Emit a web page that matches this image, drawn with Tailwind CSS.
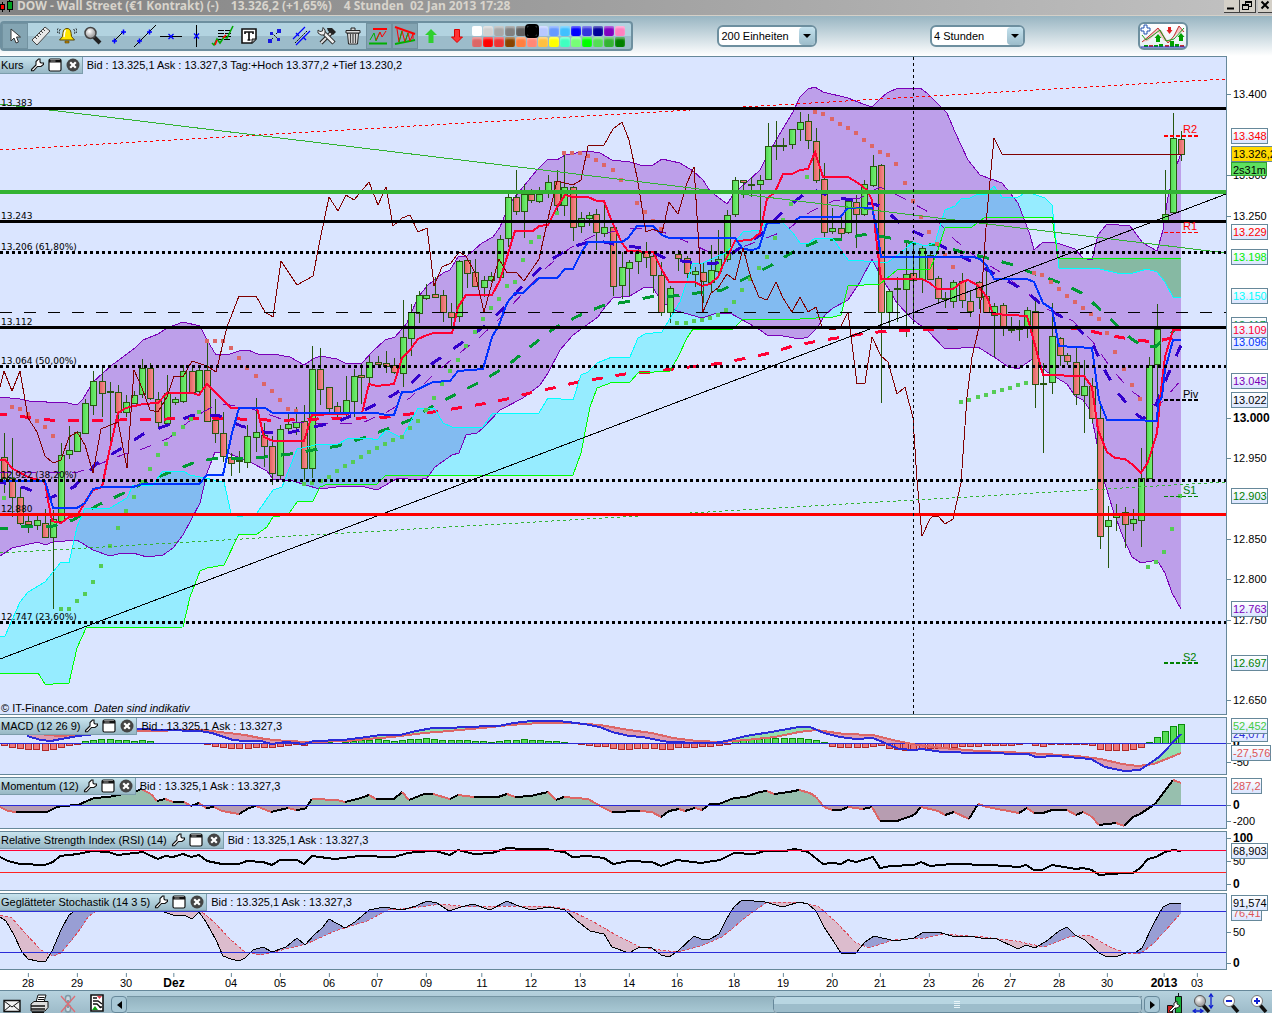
<!DOCTYPE html>
<html lang="de">
<head>
  <meta charset="UTF-8" />
  <meta name="viewport" content="width=device-width, initial-scale=1.0"/>
  <title>DOW - Wall Street (€1 Kontrakt)</title>
  <script src="https://cdn.jsdelivr.net/npm/@tailwindcss/browser@4"></script>
</head>
<body class="h-screen flex flex-col overflow-hidden bg-white font-['Liberation_Sans',Arial,sans-serif] text-[11px] leading-none text-black">

  <!-- Shared icons -->
  <svg class="absolute w-0 h-0" aria-hidden="true">
    <defs>
      <linearGradient id="gGreen"><stop offset="0" stop-color="#50d850"/><stop offset="1" stop-color="#78f078"/></linearGradient>
      <linearGradient id="gRed"><stop offset="0" stop-color="#e06060"/><stop offset="1" stop-color="#f89090"/></linearGradient>
      <radialGradient id="gLens" cx="0.4" cy="0.35"><stop offset="0" stop-color="#fff"/><stop offset="1" stop-color="#a8a8a8"/></radialGradient>
      <symbol id="wrench" viewBox="0 0 14 14">
        <path d="M1.500 11.500 6 7V3.500L8.500 1h1.500v3l1 1h2.500v1.500L11 8.500H7.500L3.500 12.800H1.500Z" fill="#fff" stroke="#111" stroke-width="1.100"/>
      </symbol>
      <symbol id="window" viewBox="0 0 14 14">
        <rect x="1" y="1" width="12" height="12" rx="1.500" fill="#fff" stroke="#111" stroke-width="1.200"/>
        <path d="M1 2h12v2.500H1z" fill="#111"/><path d="M2.500 3h5" stroke="#999"/>
      </symbol>
      <symbol id="close" viewBox="0 0 14 14">
        <circle cx="7" cy="7" r="6.500" fill="#444"/>
        <path d="M4.200 4.200 9.800 9.800M9.800 4.200 4.200 9.800" stroke="#fff" stroke-width="2.200"/>
      </symbol>
    </defs>
  </svg>

  <!-- Title bar -->
  <header class="h-4 shrink-0 flex items-start bg-linear-to-r from-[#828282] to-[#c2c2c2] border-b border-[#d4d0c8] text-[#d8d4cc]">
    <svg class="w-4 h-3 shrink-0" viewBox="0 0 16 12" shape-rendering="crispEdges">
      <path d="M2.500 2v10M9.500 0v12" stroke="#000"/>
      <rect x="0" y="4.500" width="4.500" height="5" fill="#f00" stroke="#000"/>
      <rect x="7.500" y="1.500" width="5" height="8" fill="#00a020" stroke="#000"/>
    </svg>
    <h1 class="flex-1 flex gap-3 pl-px font-['Noto_Sans',sans-serif] font-bold text-[12px] leading-3 whitespace-nowrap">
      <span>DOW - Wall Street (€1 Kontrakt) (-)</span>
      <span>13.326,2 (+1,65%)</span>
      <span>4 Stunden&nbsp; 02 Jan 2013 17:28</span>
    </h1>
    <button aria-label="Minimieren" class="w-4 h-[13px] bg-[#d4d0c8] border-r border-b border-[#404040]"><svg viewBox="0 0 15 12" class="w-full h-full"><path d="M3 8.500h7" stroke="#000" stroke-width="2"/></svg></button>
    <button aria-label="Wiederherstellen" class="w-4 h-[13px] bg-[#d4d0c8] border-r border-b border-[#404040]"><svg viewBox="0 0 15 12" class="w-full h-full" shape-rendering="crispEdges"><path d="M5.500 4V1.500h6v5H9M2.500 4.500h6v5h-6z" fill="none" stroke="#000"/><path d="M5 2h7M2 5h7" stroke="#000" stroke-width="2"/></svg></button>
    <button aria-label="Schließen" class="ml-0.5 w-[14px] h-[13px] bg-[#d4d0c8] border-b border-[#404040]"><svg viewBox="0 0 14 12" class="w-full h-full"><path d="M3.500 1.500 10.500 8.500M10.500 1.500 3.500 8.500" stroke="#000" stroke-width="2"/></svg></button>
  </header>

  <!-- Toolbar -->
  <div class="h-10 shrink-0 flex items-center bg-linear-to-b from-[#98b5c2] to-white">
    <div class="flex items-center h-[30px] rounded border-2 border-[#6d8f9f] bg-linear-to-b from-[#b2d3e0] from-50% to-[#9cbcca] to-50% pr-1.5">
      <div id="tools" class="flex">
        <button aria-label="Auswahl" class="w-[26px] h-[26px] grid place-items-center bg-[#84a5b3] border border-[#7292a0]"><svg class="w-5 h-5" viewBox="0 0 20 20"><path d="M6 3v12l3-3 2 5 2.500-1-2-5h4z" fill="#fff" stroke="#333"/></svg></button>
        <button aria-label="Lineal" class="w-[26px] h-[26px] grid place-items-center"><svg class="w-5 h-5" viewBox="0 0 20 20"><path d="M1 14 14 1l5 4L6 19z" fill="#e8e8e8" stroke="#444"/><path d="m4 11 2 2m0-4 2 2m0-4 2 2m0-4 2 2m0-4 2 2" stroke="#444"/></svg></button>
        <button aria-label="Alarm" class="w-[26px] h-[26px] grid place-items-center"><svg class="w-5 h-5" viewBox="0 0 20 20"><path d="M10 2.500c-4 0-4 4-4.500 8L2.500 14h15l-3-3.500c-.5-4-.5-8-4.500-8z" fill="#ffe600" stroke="#5a4500"/><path d="M8.500 4c-1.500 2-1 5-1.500 7" stroke="#fff" stroke-width="1.500" fill="none"/><path d="M8 15h4v2H8z" fill="#b88000" stroke="#5a4500" stroke-width=".6"/><path d="M3.500 3Q1.500 5 2.500 8M1 2.500Q-.5 5 .5 7M16.500 3q2 2 1 5M19 2.500q1.500 2.500.5 4.500" stroke="#111" fill="none" stroke-dasharray="2 1"/></svg></button>
        <button aria-label="Lupe" class="w-[26px] h-[26px] grid place-items-center"><svg class="w-5 h-5" viewBox="0 0 20 20"><path d="m11 11 6 6" stroke="#222" stroke-width="4"/><circle cx="7.500" cy="7" r="5.500" fill="url(#gLens)" stroke="#444" stroke-width="1.500"/></svg></button>
        <button aria-label="Strecke" class="w-[26px] h-[26px] grid place-items-center"><svg class="w-[26px] h-5" viewBox="0 0 26 20"><path d="m8 15 9-9" stroke="#000"/><path d="M6 15h5M8.500 12.500v5M15 6h5M17.500 3.500v5" stroke="#00f" stroke-width="1.500"/></svg></button>
        <button aria-label="Gerade" class="w-[26px] h-[26px] grid place-items-center"><svg class="w-[26px] h-6" viewBox="0 0 26 24"><path d="M2 23 24 1" stroke="#000"/><path d="M5 17h5M7.500 14.500v5M15 8h5M17.500 5.500v5" stroke="#00f" stroke-width="1.500"/></svg></button>
        <button aria-label="Horizontale" class="w-[26px] h-[26px] grid place-items-center"><svg class="w-[26px] h-5" viewBox="0 0 26 20"><path d="M2 10.500h22" stroke="#000"/><path d="m10.500 8 5 5m0-5-5 5" stroke="#00f" stroke-width="1.300"/></svg></button>
        <button aria-label="Vertikale" class="w-[26px] h-[26px] grid place-items-center"><svg class="w-[26px] h-[22px]" viewBox="0 0 26 22"><path d="M12.500 0v22" stroke="#000"/><path d="m10 8.500 5 5m0-5-5 5" stroke="#00f" stroke-width="1.300"/></svg></button>
        <button aria-label="Fibonacci" class="w-[26px] h-[26px] grid place-items-center"><svg class="w-6 h-[22px]" viewBox="0 0 24 22"><path d="M7 5.500h13M7 8.500h13M7 11.500h13M6 14.500h13" stroke="#000" stroke-dasharray="6 1"/><path d="m1 18 2 2 3-6 3 4 4-6 3 1 6-12" fill="none" stroke="#00a800" stroke-width="1.600"/><path d="m4 20 2-5M12 13l3-3" stroke="#f00" stroke-width="1.600"/></svg></button>
        <button aria-label="Text" class="w-[26px] h-[26px] grid place-items-center"><svg class="w-4 h-4" viewBox="0 0 16 16"><path d="M1 1h14v10l-4 4H1z" fill="#fff" stroke="#111" stroke-width="1.600"/><path d="M11 15v-4h4" fill="#999" stroke="#111"/><path d="M4 6V4h8v2M8 4v8M6.500 12h3" fill="none" stroke="#111" stroke-width="1.700"/></svg></button>
        <button aria-label="Zickzack" class="w-[26px] h-[26px] grid place-items-center"><svg class="w-4 h-4" viewBox="0 0 16 16"><path d="m3 13 3-3M5 5l6 6M9 6l3-3" fill="none" stroke="#000" stroke-dasharray="2 1"/><path d="M1 11h4v4H1zM10 1h4v4h-4zM3 4h3v3H3zM10 10h3v3h-3z" fill="#1818e0"/></svg></button>
        <button aria-label="Parallelen" class="w-[26px] h-[26px] grid place-items-center"><svg class="w-5 h-5" viewBox="0 0 20 20"><path d="M2 13 14 1M5 19 19 5" stroke="#00f" stroke-width="1.200"/><path d="m4 17 12-12" stroke="#000" stroke-dasharray="2 1"/><path d="m5 7 3 3m4 1 3 3" stroke="#00f" stroke-width="1.400"/></svg></button>
        <button aria-label="Werkzeuge" class="w-[26px] h-[26px] grid place-items-center"><svg class="w-5 h-5" viewBox="0 0 20 20"><path d="m15 6-11 11" stroke="#222" stroke-width="4"/><path d="m14 7-10 10" stroke="#ddd" stroke-width="2"/><path d="M10 2h5l4 4-3 3-5-4z" fill="#222"/><path d="m6 6 11 11" stroke="#222" stroke-width="4.500"/><path d="m5 5 11.500 11.500" stroke="#eee" stroke-width="2.500"/><path d="M1 4v3l3 2h3l1-2V4L6 1.500 5.500 5 3 5.500z" fill="#eee" stroke="#333"/></svg></button>
        <button aria-label="Papierkorb" class="w-[26px] h-[26px] grid place-items-center"><svg class="w-4 h-[18px]" viewBox="0 0 16 18"><path d="M2.500 6h11l-1 11h-9z" fill="#eee" stroke="#222"/><path d="M5.500 7v9M8 7v9M10.500 7v9" stroke="#444" stroke-width="1.300"/><path d="M1 3.500h14V6H1zM6 3V1h4v2" fill="#ddd" stroke="#222"/></svg></button>
        <button aria-label="Unterstützung und Widerstand" class="w-[26px] h-[26px] grid place-items-center bg-[#84a5b3] border border-[#7292a0]"><svg class="w-[22px] h-5" viewBox="0 0 22 20"><path d="M5 3h14" stroke="#f00" stroke-width="2"/><path d="M1 17.500h18" stroke="#00b000" stroke-width="2"/><path d="m2 14 4-7 2 8 4-9" fill="none" stroke="#00b000"/><path d="m8 14 4-8 2 5 4-6" fill="none" stroke="#f00"/></svg></button>
        <button aria-label="Dreieck" class="w-[26px] h-[26px] grid place-items-center bg-[#84a5b3] border border-[#7292a0]"><svg class="w-[22px] h-5" viewBox="0 0 22 20"><path d="m1 1 20 7" stroke="#f00" stroke-width="2"/><path d="m1 18 20-4" stroke="#00b000" stroke-width="2"/><path d="m3 3 2 13L8 5l3 11 3-9 2 8 3-7v5" fill="none" stroke="#f00"/><path d="m5 16 3-11m3 11 3-9" stroke="#00b000"/></svg></button>
        <button aria-label="Kauf" class="w-[26px] h-[26px] grid place-items-center"><svg class="w-3 h-[14px]" viewBox="0 0 12 14"><path d="m6 0 6 6H8.500v8h-5V6H0z" fill="#2fd02f"/></svg></button>
        <button aria-label="Verkauf" class="w-[26px] h-[26px] grid place-items-center"><svg class="w-3 h-[14px]" viewBox="0 0 12 14"><path d="m6 13.500 5.500-5.500H8.500V.5h-5V8H.5z" fill="#f33" stroke="#d00"/></svg></button>
      </div>
      <div id="palette" class="grid grid-cols-14 gap-px pl-0.5"></div>
    </div>
    <div class="flex-3"></div>
    <label class="relative w-[100px] h-[22px]">
      <select aria-label="Einheiten" class="appearance-none w-full h-full rounded-md border-2 border-[#6d8f9f] bg-white pl-0.5 text-[11px]"><option>200 Einheiten</option></select>
      <span class="pointer-events-none absolute right-0.5 top-0.5 w-4 h-[18px] rounded-sm bg-linear-to-b from-[#c4e2ee] to-[#9cbcca] grid place-items-center"><svg class="w-2 h-1" viewBox="0 0 8 4"><path d="M0 0h8L4 4z"/></svg></span>
    </label>
    <div class="flex-4"></div>
    <label class="relative w-[95px] h-[22px]">
      <select aria-label="Zeiteinheit" class="appearance-none w-full h-full rounded-md border-2 border-[#6d8f9f] bg-white pl-0.5 text-[11px]"><option>4 Stunden</option></select>
      <span class="pointer-events-none absolute right-0.5 top-0.5 w-4 h-[18px] rounded-sm bg-linear-to-b from-[#c4e2ee] to-[#9cbcca] grid place-items-center"><svg class="w-2 h-1" viewBox="0 0 8 4"><path d="M0 0h8L4 4z"/></svg></span>
    </label>
    <div class="flex-4"></div>
    <button aria-label="Indikatoren" class="w-[50px] h-7 rounded-md border-2 border-[#6d8f9f] bg-linear-to-b from-white to-[#e4eef2]">
      <svg class="w-full h-full" viewBox="0 0 46 24">
        <path d="M2 18 18 4 22 7 28 19 30 18 39 2 44 8 38 9 30 16 24 17 18 8 8 17z" fill="#f4c4c4"/>
        <path d="M2 18 8 13 18 4 28 19 34 12 39 2 44 8" fill="none" stroke="#c03030"/>
        <path d="M2 11 6 16 12 12 20 6 26 17 34 15 44 4" fill="none" stroke="#20a020"/>
        <path d="M4 1h3v3h3v3H7v3H4V7H1V4h3z" fill="#fff" stroke="#2050b0"/>
        <path d="m18 10 3.500 4H20v4h-4v-4h-1.500zM41 9l3.500 4H43v4h-4v-4h-1.500z" fill="#00a000"/><path d="M28 3v3h-1.500l3 4 3-4H31V3z" fill="#e02020"/>
        <path d="M4 21h4v2H4zM14 21h4v2h-4zM19 20h4v3h-4zM30 17h4v6h-4zM35 20h4v3h-4z" fill="#00a000"/><path d="M9 21h4v2H9zM25 21h4v2h-4zM40 21h4v2h-4z" fill="#c03030"/>
        <path d="M1 23h44" stroke="#2020c0"/>
      </svg>
    </button>
    <div class="flex-3"></div>
  </div>

  <!-- Price chart -->
  <section class="flex-1 min-h-0 flex mb-0.5">
    <div class="relative flex-1 min-w-0 border border-l-0 border-[#66889a] bg-[#dae5ff]">
      <svg id="price" class="block w-full h-full" viewBox="0 57 1226 657" preserveAspectRatio="none" shape-rendering="crispEdges" fill="none"></svg>
      <div id="priceLabels"></div>
      <div class="absolute left-0 top-0 flex items-center">
        <div class="flex items-center gap-1 h-[17px] pl-px pr-0.5 border-r border-b border-[#7c9dac] bg-linear-to-b from-[#c8e4ee] to-[#98b8c6]">
          <span class="pr-0.5">Kurs</span>
          <button aria-label="Einstellungen"><svg class="w-[14px] h-[14px]"><use href="#wrench"/></svg></button>
          <button aria-label="Fenster"><svg class="w-[14px] h-[14px]"><use href="#window"/></svg></button>
          <button aria-label="Schließen"><svg class="w-[14px] h-[14px]"><use href="#close"/></svg></button>
        </div>
        <span class="pl-1">Bid : 13.325,1 Ask : 13.327,3 Tag:+Hoch 13.377,2 +Tief 13.230,2</span>
      </div>
      <p class="absolute left-px bottom-0 leading-3">© IT-Finance.com &nbsp;<i>Daten sind indikativ</i></p>
    </div>
    <div id="priceAxis" class="relative w-[45px] shrink-0"></div>
  </section>

  <!-- MACD -->
  <section class="h-[58px] shrink-0 flex mb-0.5">
    <div class="relative flex-1 min-w-0 border border-l-0 border-[#66889a] bg-[#dae5ff]">
      <svg id="macd" class="block w-full h-full" viewBox="0 718 1226 56" preserveAspectRatio="none" shape-rendering="crispEdges" fill="none"></svg>
      <div class="absolute left-0 top-0 flex items-center">
        <div class="flex items-center gap-1 h-[17px] pl-px pr-0.5 border-r border-b border-[#7c9dac] bg-linear-to-b from-[#c8e4ee] to-[#98b8c6]">
          <span>MACD (12 26 9)</span>
          <button aria-label="Einstellungen"><svg class="w-[14px] h-[14px]"><use href="#wrench"/></svg></button>
          <button aria-label="Fenster"><svg class="w-[14px] h-[14px]"><use href="#window"/></svg></button>
          <button aria-label="Schließen"><svg class="w-[14px] h-[14px]"><use href="#close"/></svg></button>
        </div>
        <span class="pl-1">Bid : 13.325,1 Ask : 13.327,3</span>
      </div>
    </div>
    <div id="macdAxis" class="relative w-[45px] shrink-0"></div>
  </section>

  <!-- Momentum -->
  <section class="h-[52px] shrink-0 flex mb-0.5">
    <div class="relative flex-1 min-w-0 border border-l-0 border-[#66889a] bg-[#dae5ff]">
      <svg id="momentum" class="block w-full h-full" viewBox="0 778 1226 50" preserveAspectRatio="none" shape-rendering="crispEdges" fill="none"></svg>
      <div class="absolute left-0 top-0 flex items-center">
        <div class="flex items-center gap-1 h-[17px] pl-px pr-0.5 border-r border-b border-[#7c9dac] bg-linear-to-b from-[#c8e4ee] to-[#98b8c6]">
          <span>Momentum (12)</span>
          <button aria-label="Einstellungen"><svg class="w-[14px] h-[14px]"><use href="#wrench"/></svg></button>
          <button aria-label="Fenster"><svg class="w-[14px] h-[14px]"><use href="#window"/></svg></button>
          <button aria-label="Schließen"><svg class="w-[14px] h-[14px]"><use href="#close"/></svg></button>
        </div>
        <span class="pl-1">Bid : 13.325,1 Ask : 13.327,3</span>
      </div>
    </div>
    <div id="momentumAxis" class="relative w-[45px] shrink-0"></div>
  </section>

  <!-- RSI -->
  <section class="h-[60px] shrink-0 flex mb-0.5">
    <div class="relative flex-1 min-w-0 border border-l-0 border-[#66889a] bg-[#dae5ff]">
      <svg id="rsi" class="block w-full h-full" viewBox="0 832 1226 58" preserveAspectRatio="none" shape-rendering="crispEdges" fill="none"></svg>
      <div class="absolute left-0 top-0 flex items-center">
        <div class="flex items-center gap-1 h-[17px] pl-px pr-0.5 border-r border-b border-[#7c9dac] bg-linear-to-b from-[#c8e4ee] to-[#98b8c6]">
          <span>Relative Strength Index (RSI) (14)</span>
          <button aria-label="Einstellungen"><svg class="w-[14px] h-[14px]"><use href="#wrench"/></svg></button>
          <button aria-label="Fenster"><svg class="w-[14px] h-[14px]"><use href="#window"/></svg></button>
          <button aria-label="Schließen"><svg class="w-[14px] h-[14px]"><use href="#close"/></svg></button>
        </div>
        <span class="pl-1">Bid : 13.325,1 Ask : 13.327,3</span>
      </div>
    </div>
    <div id="rsiAxis" class="relative w-[45px] shrink-0"></div>
  </section>

  <!-- Stochastic -->
  <section class="h-[77px] shrink-0 flex">
    <div class="relative flex-1 min-w-0 border border-l-0 border-[#66889a] bg-[#dae5ff]">
      <svg id="stoch" class="block w-full h-full" viewBox="0 894 1226 75" preserveAspectRatio="none" shape-rendering="crispEdges" fill="none"></svg>
      <div class="absolute left-0 top-0 flex items-center">
        <div class="flex items-center gap-1 h-[17px] pl-px pr-0.5 border-r border-b border-[#7c9dac] bg-linear-to-b from-[#c8e4ee] to-[#98b8c6]">
          <span>Geglätteter Stochastik (14 3 5)</span>
          <button aria-label="Einstellungen"><svg class="w-[14px] h-[14px]"><use href="#wrench"/></svg></button>
          <button aria-label="Fenster"><svg class="w-[14px] h-[14px]"><use href="#window"/></svg></button>
          <button aria-label="Schließen"><svg class="w-[14px] h-[14px]"><use href="#close"/></svg></button>
        </div>
        <span class="pl-1">Bid : 13.325,1 Ask : 13.327,3</span>
      </div>
    </div>
    <div id="stochAxis" class="relative w-[45px] shrink-0"></div>
  </section>

  <!-- Dates -->
  <div class="h-5 shrink-0 pr-[46px]"><div id="dates" class="relative h-full"></div></div>

  <!-- Bottom bar -->
  <footer class="h-[23px] shrink-0 flex items-end border-t border-[#66889a] bg-linear-to-b from-[#b6d2de] to-[#9dbbc9] overflow-hidden">
    <button aria-label="Senden" class="w-7 h-5 pl-[3px]"><svg class="w-[18px] h-5" viewBox="0 0 18 20"><path d="M1 7.500h16v11H1z" fill="#f4f4f4" stroke="#111" stroke-width="1.400"/><path d="m1 8 8 6 8-6M1 18l6-5m10 5-6-5" fill="none" stroke="#111"/></svg></button>
    <button aria-label="Drucken" class="w-7 h-5 pl-0.5"><svg class="w-[19px] h-5" viewBox="0 0 19 20"><path d="M6 9 8 2h8l-2 7z" fill="#fff" stroke="#111"/><path d="M8.500 4.500h6M8 6.500h6" stroke="#111"/><path d="M1 11 4 8.500h14v6L15 18H1z" fill="#ddd" stroke="#111"/><path d="M1 13h14M1 16h14" stroke="#111" stroke-width="1.600"/><path d="M2 19.500h12" stroke="#111" stroke-width="2"/></svg></button>
    <button aria-label="Verknüpfung" class="w-7 h-5 pl-1"><svg class="w-4 h-5" viewBox="0 0 16 20"><rect x="5.500" y="2.500" width="5" height="7" rx="2.500" fill="#c8d8e0" stroke="#8099a6" stroke-width="1.500"/><rect x="5.500" y="12" width="5" height="7" rx="2.500" fill="#c8d8e0" stroke="#8099a6" stroke-width="1.500"/><path d="M8 7v8" stroke="#8099a6" stroke-width="2"/><path d="m1 3 14 16M15 3 1 19" stroke="#e06c74" stroke-width="1.300"/></svg></button>
    <button aria-label="Liste" class="w-[27px] h-5 pl-1.5"><svg class="w-3.5 h-[18px]" viewBox="0 0 14 18"><path d="M1 1h12v16H1z" fill="#fff" stroke="#111" stroke-width="1.600"/><path d="M3 4h4M3 7h5l4 3M3 10h4l4 4M9 13h3" stroke="#111" stroke-width="1.400" fill="none"/><path d="M7 2h5L9.500 5z" fill="#e04050"/><path d="m2 16 3-4 3 4z" fill="#10a010"/></svg></button>
    <button aria-label="Zurück" class="w-4 h-[17px] rounded border border-[#66889a] bg-[#a8c8d6] grid place-items-center"><svg class="w-[5px] h-2" viewBox="0 0 5 8"><path d="M5 0v8L0 4z"/></svg></button>
    <div role="scrollbar" aria-controls="price" aria-valuenow="100" class="flex-1 h-[17px] mr-0.5 flex border-y border-[#7595a3] bg-linear-to-b from-[#93b3c0] to-[#a8c8d4]">
      <div class="flex-1"></div>
      <div class="w-4/11 -my-px rounded border border-white outline outline-[#66889a] -outline-offset-1 bg-linear-to-b from-[#b8d6e2] from-50% to-[#9dbdcb] to-50% grid place-items-center"><svg class="w-1.5 h-[7px]" viewBox="0 0 6 7" shape-rendering="crispEdges"><path d="M0 .5h6M0 2.500h6M0 4.500h6M0 6.500h6" stroke="#e8f4f8"/></svg></div>
    </div>
    <button aria-label="Vor" class="w-4 h-[17px] rounded border border-[#66889a] bg-[#a8c8d6] grid place-items-center"><svg class="w-[5px] h-2" viewBox="0 0 5 8"><path d="M0 0v8l5-4z"/></svg></button>
    <button aria-label="Kerzen" class="w-7 h-5 pl-1.5"><svg class="w-[18px] h-5" viewBox="0 0 18 20"><path d="M12.500 0v20" stroke="#111"/><path d="M9.500 3.500h6V20h-6z" fill="#18b038" stroke="#111"/><path d="M1.500 12.500h5V20h-5z" fill="#d02020" stroke="#111"/><path d="m3 18 5-5v-3l3-2v3l2 1 1 1-3 2H9l-4 4z" fill="#fff" stroke="#222"/></svg></button>
    <button aria-label="Anpassen" class="w-7 h-5 pl-1"><svg class="w-6 h-5" viewBox="0 0 24 20"><path d="m11 12 6 7" stroke="#111" stroke-width="3.500"/><circle cx="8" cy="8" r="5.500" fill="url(#gLens)" stroke="#555"/><path d="M19 2v12M17 4l2-3 2 3M17 12l2 3 2-3M2 18h8M4 16l-3 2 3 2M8 16l3 2-3 2" fill="none" stroke="#1020d0" stroke-width="1.300"/></svg></button>
    <button aria-label="Verkleinern" class="w-7 h-5 pl-1.5"><svg class="w-[18px] h-5" viewBox="0 0 18 20"><path d="m10 12 6 7" stroke="#111" stroke-width="3.500"/><circle cx="7" cy="8" r="5.500" fill="#fff" stroke="#777"/><path d="M4 8h6" stroke="#1020d0" stroke-width="2"/></svg></button>
    <button aria-label="Vergrößern" class="w-7 h-5 pl-1.5"><svg class="w-[18px] h-5" viewBox="0 0 18 20"><path d="m10 12 6 7" stroke="#111" stroke-width="3.500"/><circle cx="7" cy="8" r="5.500" fill="#fff" stroke="#777"/><path d="M4 8h6M7 5v6" stroke="#1020d0" stroke-width="2"/></svg></button>
  </footer>

  <script>
    const pts = s => s.trim().split(/\s+/).map(p => p.split(',').map(Number));
    const line = (s, stroke, w = 1, extra = '') => `<polyline points="${s.trim()}" stroke="${stroke}" stroke-width="${w}" ${extra}/>`;
    const area = (a, b, fill, extra = '') => `<polygon points="${pts(a).concat(pts(b).reverse()).join(' ')}" fill="${fill}" ${extra}/>`;
    const hline = (y, stroke, w = 1, dash = '') => `<path d="M0 ${y}H1226" stroke="${stroke}" stroke-width="${w}" stroke-dasharray="${dash}"/>`;

    // value of a polyline at x
    function at(p, x) {
      for (let i = 1; i < p.length; i++) {
        if (x <= p[i][0]) {
          const [x0, y0] = p[i - 1], [x1, y1] = p[i];
          return y0 + (y1 - y0) * (x - x0) / (x1 - x0 || 1);
        }
      }
      return p[p.length - 1][1];
    }

    // fill between two lines, one colour for each side
    function between(a, b, above, below) {
      const pa = pts(a), pb = pts(b);
      let up = '', down = '';
      for (let x = pa[0][0]; x <= 1180; x++) {
        const ya = at(pa, x), yb = at(pb, x);
        if (ya < yb) up += `M${x}.5 ${ya}V${yb}`; else down += `M${x}.5 ${yb}V${ya}`;
      }
      return `<path d="${up}" stroke="${above}"/><path d="${down}" stroke="${below}"/>`;
    }

    // ---- price chart ----
    const bollUp = `0,397 20,399 33,402 43,401 50,403 63,402 77,405 83,399 93,382 112,365 135,348 143,340 158,334 167,328 183,322 200,326 207,340 216,355 230,354 242,350 248,350 260,355 273,354 290,357 304,365 313,359 320,356 337,359 347,364 362,363 373,351 385,340 395,337 407,323 418,297 428,285 443,273 450,270 458,257 467,256 482,243 493,237 500,227 510,203 523,187 537,170 548,159 557,160 565,155 588,151 600,153 612,160 630,162 640,165 653,165 662,159 680,163 693,171 703,180 710,191 727,204 735,192 747,182 760,170 772,147 793,112 800,97 808,89 815,87 823,92 848,98 863,104 872,107 880,99 887,93 898,88 920,88 927,93 940,106 947,113 955,132 968,160 980,175 1002,183 1018,203 1030,235 1034,250 1043,242 1057,243 1075,249 1083,258 1092,260 1098,235 1107,224 1130,226 1143,243 1157,251 1163,230 1168,197 1175,170 1181,153`;
    const bollLow = `0,556 12,548 38,542 45,545 53,542 77,540 93,550 110,556 122,553 133,553 147,557 163,555 173,548 183,535 200,503 207,473 215,452 230,454 250,462 267,471 273,479 293,481 319,489 345,486 365,487 377,490 398,478 418,480 427,478 435,467 452,455 459,453 466,435 477,433 483,428 500,410 523,398 540,385 548,373 560,350 573,335 598,317 605,307 613,298 630,296 645,287 653,288 662,302 677,311 702,318 717,313 730,313 748,323 760,330 767,335 783,336 800,339 808,337 817,328 825,315 833,308 848,300 860,282 872,259 883,280 897,303 913,320 927,330 945,349 978,347 997,359 1007,366 1018,369 1034,358 1047,372 1067,384 1075,396 1083,400 1090,410 1095,433 1103,477 1113,510 1123,537 1132,557 1141,563 1157,560 1165,573 1172,593 1181,609`;
    const spanA1 = `0,637 5,636 12,620 20,602 28,592 45,582 61,562 69,563 77,527 85,508 110,508 127,498 133,485 152,486 162,472 183,471 190,475 224,482 231,513 239,517 257,513 273,490 282,487 297,449 320,444 338,444 347,439 368,438 377,440 386,430 402,438 418,408 435,409 443,423 452,427 483,427 492,414 539,413 548,398 573,400 581,375 588,372 597,363 612,357 630,357 638,338 645,334 662,332 680,302 693,263 703,263 727,252 743,232 760,230 767,221 783,223 793,233 800,243 808,244 815,238 833,239 848,260 880,262 888,262 898,255 913,242 922,245 928,245 935,243 945,210 955,206 962,198 970,198 978,194 987,194 994,186 1002,197 1018,197 1025,193 1033,194 1045,198 1052,205 1058,258`;
    const spanA2 = `1058,258 1059,268 1100,269 1117,273 1133,273 1147,269 1157,272 1165,282 1173,297 1181,297`;
    const spanB1 = `0,673 38,673 45,684 53,684 69,683 77,648 86,628 183,627 190,597 200,571 207,568 224,565 239,534 257,534 267,527 273,517 288,515 297,502 313,501 320,487 328,484 377,484 386,475 573,475 581,453 590,407 597,388 613,382 630,382 638,373 670,371 678,357 687,338 693,329 733,329 743,319 800,319 833,317 841,315 848,286 880,284 897,270 930,269 937,253 945,228 972,227 985,217 1052,217 1058,258`;
    const spanB2 = `1058,258 1181,258`;
    const tenkan = `0,460 5,460 13,469 28,477 45,482 48,500 52,521 61,523 69,517 77,516 85,502 93,490 102,487 108,457 118,413 126,408 143,404 158,403 167,393 192,393 199,395 207,384 213,390 231,408 257,408 264,437 273,441 304,441 312,415 362,413 369,384 377,386 394,384 402,358 410,350 418,339 427,335 434,333 452,333 458,307 466,295 492,295 500,280 507,257 515,231 533,231 539,226 548,225 557,207 565,195 573,197 588,197 597,201 604,201 612,222 622,243 628,251 653,252 662,270 669,282 695,282 702,286 710,284 718,277 723,265 735,241 751,240 760,233 767,199 775,192 783,174 792,174 800,170 808,169 815,152 823,177 848,177 858,183 867,190 872,200 876,237 881,279 922,279 930,283 937,289 953,289 962,282 968,280 977,285 987,297 993,314 1027,316 1033,338 1043,375 1084,376 1092,387 1098,430 1107,452 1115,458 1125,459 1133,465 1141,473 1148,462 1157,433 1161,390 1165,357 1173,330 1181,330`;
    const kijun = `0,481 45,481 53,508 77,508 85,503 93,489 102,487 133,487 143,484 199,484 207,475 223,475 232,433 239,408 265,408 273,413 377,413 386,415 394,415 402,392 412,392 433,382 450,381 458,371 483,369 492,337 499,325 507,303 515,293 523,293 539,278 557,278 565,269 573,269 581,253 588,242 622,242 628,238 637,226 653,226 662,235 669,238 735,238 743,249 752,250 759,248 767,223 793,222 800,217 840,217 848,208 872,208 877,230 881,257 973,257 980,259 987,266 994,279 1027,279 1034,282 1043,303 1052,309 1059,346 1092,348 1099,400 1107,420 1133,420 1157,421 1158,403 1162,397 1165,370 1173,340 1181,340`;
    const chikou = `0,387 4,371 12,391 20,371 25,400 28,418 37,432 45,456 53,463 61,460 69,437 77,432 85,445 93,473 101,429 118,422 127,468 134,370 142,388 150,410 158,412 167,397 174,376 183,377 192,361 207,366 216,372 227,327 239,296 256,296 265,312 273,317 281,261 297,285 313,276 320,240 329,197 338,211 346,195 354,200 369,182 378,205 386,187 393,226 402,218 410,215 418,232 427,228 431,260 434,286 442,267 451,263 459,252 466,256 475,273 484,312 492,283 499,259 507,273 516,272 524,281 539,259 547,223 557,181 573,185 581,180 588,146 604,145 613,129 622,122 629,140 637,177 646,232 653,229 662,233 669,202 678,214 687,183 694,167 703,312 711,293 718,288 727,274 735,280 743,248 751,278 759,297 767,300 776,282 783,298 792,312 800,297 808,312 816,307 822,327 832,330 840,328 848,312 857,384 865,383 872,337 881,356 888,362 897,394 905,387 913,418 917,480 922,536 930,519 933,516 939,517 945,524 953,519 961,483 967,397 972,357 979,327 982,287 987,213 994,138 1002,154 1181,154`;
    const maRed = `0,414 25,417 50,420 73,421 120,420 167,419 213,418 267,420 290,420 317,419 362,418 387,417 410,414 433,412 458,408 482,404 507,399 530,393 553,388 578,382 602,378 625,374 650,372 673,369 697,366 722,363 747,358 770,353 793,346 818,341 843,337 867,333 890,331 937,329 987,327 1060,327 1082,329 1107,335 1130,339 1153,342 1177,337 1181,335`;
    const maGreen = `0,529 25,526 50,527 73,520 98,505 122,494 145,482 168,473 193,463 217,458 240,459 265,457 290,454 313,450 338,446 363,438 387,429 410,420 433,406 458,393 482,381 507,366 530,347 553,329 578,316 602,306 625,302 650,297 673,296 697,293 722,290 746,278 770,266 793,252 818,241 842,239 867,234 890,238 913,243 937,245 962,252 987,258 1010,264 1035,274 1058,282 1082,293 1105,314 1129,337 1142,346 1156,346 1177,328`;
    const maIndigo = `0,482 25,488 50,498 74,487 97,463 122,448 145,433 168,425 193,415 217,415 241,426 265,432 288,433 313,427 337,422 362,411 385,400 409,385 433,363 456,347 482,328 502,310 523,285 547,262 572,247 595,240 618,245 643,248 667,259 690,262 715,264 740,248 762,234 785,209 811,189 833,197 858,201 881,206 904,227 928,238 952,252 977,264 1000,277 1024,290 1046,308 1071,322 1092,342 1103,367 1117,392 1136,414 1143,419 1155,407 1167,377 1181,345`;
    const maPurple = `0,472 78,472 97,465 122,455 145,448 169,438 193,418 217,404 243,406 267,414 290,422 320,424 362,423 387,412 410,398 433,375 457,355 480,337 500,318 523,293 547,267 570,248 593,236 620,230 640,228 663,232 690,243 715,255 735,250 787,230 810,212 833,201 860,198 880,187 907,200 930,213 955,240 980,260 1002,273 1027,293 1045,308 1073,321 1093,342 1110,367 1130,390 1150,404 1160,404 1175,387 1181,380`;

    // x, high, body top, body bottom, low, 1 = rising
    const candles = `4,433,457,478,493,0 12,438,478,497,517,0 20,487,497,523,525,0 28,516,521,524,533,0 37,514,520,525,530,1 45,509,523,537,538,0 53,510,519,537,609,1 61,443,455,521,523,1 69,426,450,454,459,1 77,431,432,451,451,1 85,399,403,433,434,1 93,371,381,405,415,1 102,367,381,393,417,0 110,382,392,392,442,1 118,385,392,412,422,0 126,395,402,412,417,1 134,391,395,403,404,1 142,359,368,394,398,1 150,363,368,398,400,0 158,392,399,422,427,0 167,375,393,423,425,1 175,397,399,402,405,1 183,365,371,401,403,1 192,366,371,392,394,0 199,366,370,391,393,1 207,343,370,421,422,0 215,399,420,433,443,0 223,412,433,456,462,0 231,453,457,463,476,0 239,451,461,461,473,1 247,425,436,462,468,1 256,398,432,437,452,1 264,423,435,446,467,0 272,436,446,473,485,0 280,425,429,475,479,1 288,413,424,428,433,1 296,407,422,427,435,1 304,405,421,468,480,0 312,346,369,468,478,1 320,348,369,389,405,0 329,387,387,408,412,0 337,402,406,412,420,0 346,376,400,412,417,1 354,369,376,401,417,1 361,364,375,377,404,0 369,356,362,377,387,1 378,356,362,364,365,0 386,351,363,366,373,0 394,358,365,372,374,0 403,300,337,373,387,1 411,304,312,338,356,1 419,291,295,313,323,1 426,284,295,298,300,1 435,277,294,297,298,0 443,290,295,312,322,0 451,303,312,317,327,0 459,260,261,316,322,1 467,258,260,273,288,0 475,259,272,286,287,0 484,276,280,287,297,1 491,272,276,280,282,1 500,235,239,277,280,1 508,194,197,238,247,1 516,170,197,211,215,0 524,184,194,211,238,1 531,189,194,200,203,0 539,187,194,201,203,1 548,175,182,190,198,1 557,170,181,205,213,0 564,155,187,205,216,1 573,186,187,227,241,0 581,212,218,226,233,1 589,212,215,218,226,1 596,209,214,232,250,0 604,205,227,233,237,1 613,226,227,286,296,0 622,252,267,285,299,1 629,260,262,268,296,1 638,248,252,261,274,1 646,242,252,257,268,0 653,253,256,275,293,0 661,262,275,312,316,0 670,286,288,312,323,1 678,250,254,258,271,0 687,256,258,273,278,0 695,267,271,274,287,1 703,263,272,281,303,0 711,245,270,282,293,1 718,230,259,271,277,1 727,210,215,259,262,1 735,177,180,214,217,1 743,180,180,182,198,0 751,177,185,185,197,1 760,175,180,184,227,1 768,123,146,179,180,1 776,121,146,146,160,1 783,138,146,146,151,1 792,129,129,144,149,1 800,112,122,129,141,1 808,114,121,140,149,0 816,128,141,180,183,0 824,163,179,232,237,0 832,208,228,231,234,1 841,217,228,233,238,0 848,200,201,232,234,1 856,195,202,214,248,0 864,180,184,214,216,1 873,155,166,185,187,1 881,164,165,312,403,0 889,289,291,312,327,1 897,277,289,289,322,1 906,240,274,289,337,1 913,243,273,280,320,0 922,245,248,279,293,1 930,253,255,279,280,0 938,276,278,298,304,0 945,292,299,299,308,1 953,280,282,301,308,1 962,273,281,300,308,0 970,291,301,311,317,0 979,281,282,297,309,0 986,267,296,312,313,0 994,303,306,315,357,1 1003,303,305,327,336,0 1011,317,330,330,333,1 1019,320,329,329,341,1 1027,307,310,327,338,1 1035,301,311,384,408,0 1043,363,384,384,453,1 1052,303,336,382,394,1 1060,337,338,355,366,0 1067,353,355,361,365,0 1076,348,362,394,405,0 1084,360,386,395,433,1 1092,378,386,418,423,0 1100,405,418,536,549,0 1108,506,520,526,568,1 1116,504,514,517,531,1 1125,507,512,524,548,0 1133,509,519,523,531,1 1141,448,478,520,547,1 1149,357,365,478,479,1 1157,304,329,364,407,1 1165,170,214,220,222,1 1173,113,138,212,213,1 1181,131,139,154,161,0`;
    const candle = ([x, h, t, b, l, up]) => `<path d="M${x}.5 ${h}V${l}" stroke="#26560f"/>` + (t === b
      ? `<path d="M${x - 3} ${t}h7" stroke="#26560f" stroke-width="2"/>`
      : `<rect x="${x - 2.5}" y="${t + 0.5}" width="6" height="${b - t}" fill="url(#${up ? 'gGreen' : 'gRed'})" stroke="#26560f"/>`);

    const sarDown = `12,407 20,409 28,414 37,421 45,427 53,436 207,341 215,341 223,341 231,348 239,358 247,368 256,376 264,384 272,391 280,400 288,409 296,411 564,153 572,153 580,153 588,156 596,160 604,165 613,170 621,180 637,203 645,212 653,221 661,229 815,112 823,114 832,119 840,124 848,128 856,133 864,140 872,146 880,152 888,155 896,164 905,183 913,201 921,217 929,232 937,244 945,255 953,267 1034,273 1042,275 1051,282 1059,289 1067,296 1075,302 1083,308 1091,314 1099,319 1107,333 1115,352 1124,369 1132,385 1140,399`;
    const sarUp = `4,498 61,609 69,609 77,601 85,594 93,582 101,566 110,546 118,528 126,511 134,497 142,482 150,469 158,455 166,444 174,434 183,427 191,419 199,412 304,484 312,483 321,481 329,477 337,471 345,466 353,462 361,457 369,452 377,448 385,444 393,440 402,437 410,428 418,421 426,410 434,398 442,384 450,371 458,360 466,346 475,332 483,319 491,308 499,299 507,286 515,282 523,260 531,242 539,237 557,213 677,323 686,323 694,321 702,320 710,318 718,315 726,310 734,302 742,290 750,279 759,268 767,257 775,238 783,220 791,204 807,177 961,402 969,400 978,397 986,395 994,392 1002,390 1010,388 1018,385 1026,383 1148,567 1156,562 1164,552 1172,529 1180,496`;
    const dots = (s, fill) => pts(s).map(([x, y]) => `<rect x="${x - 2}" y="${y - 2}" width="4" height="4" fill="${fill}"/>`).join('');
    const pivot = (y, stroke, w) => `<path d="M1164 ${y}h34" stroke="${stroke}" stroke-width="${w}" stroke-dasharray="4 2"/>`;

    document.getElementById('price').innerHTML =
      `<clipPath id="band">${area(bollUp, bollLow, '#000')}</clipPath>` +
      area(bollUp, bollLow, '#bd9fea') +
      area(spanA1, spanB1, '#96ecff') +
      area(spanA1, spanB1, '#82bbf1', 'clip-path="url(#band)"') +
      area(spanA2, spanB2, '#86b9a3') +
      line(bollUp, '#7a00b8') + line(bollLow, '#7a00b8') +
      pts(candles).map(candle).join('') +
      line(maPurple, '#7a00b8', 1, 'stroke-dasharray="12 12"') +
      line(maRed, '#ff0033', 3, 'stroke-dasharray="11 13" stroke-dashoffset="4"') +
      line(maGreen, '#009933', 3, 'stroke-dasharray="12 13" stroke-dashoffset="4"') +
      line(maIndigo, '#3300cc', 3, 'stroke-dasharray="12 15" stroke-dashoffset="6"') +
      line(spanA1 + ' ' + spanA2, '#00ffff') + line(spanB1 + ' ' + spanB2, '#00ff00') +
      dots(sarDown, '#dd6666') + dots(sarUp, '#55cc55') +
      line(tenkan, '#ff0033', 2) + line(kijun, '#0033ff', 2) + line(chikou, '#800000') +
      line('0,150 1226,79', '#ff0000', 1, 'stroke-dasharray="3 3"') +
      line('0,104 1226,253', '#33b333') +
      line('0,553 1226,482', '#33b333', 1, 'stroke-dasharray="3 3"') +
      line('0,659 1226,194', '#000') +
      hline(312.5, '#000', 1, '12 12') +
      hline(252.5, '#000', 3, '3 3') + hline(366.5, '#000', 3, '3 3') + hline(480.5, '#000', 3, '3 3') + hline(622.5, '#000', 3, '3 3') +
      hline(108.5, '#000', 3) + hline(221.5, '#000', 3) + hline(327.5, '#000', 3) +
      hline(192, '#33b333', 4) + hline(514.5, '#ff0000', 3) +
      '<path d="M913.5 57V714" stroke="#000" stroke-dasharray="3 3"/>' +
      pivot(136, '#ff0000', 2) + pivot(232.5, '#ff0000', 1) + pivot(400, '#000', 2) + pivot(496.5, '#008000', 1) + pivot(663, '#008000', 2);

    [[103, '13.383'], [216, '13.243'], [247, '13.206 (61,80%)'], [322, '13.112'], [361, '13.064 (50,00%)'], [475, '12.922 (38,20%)'], [509, '12.880'], [617, '12.747 (23,60%)']].forEach(([y, t]) => {
      document.getElementById('priceLabels').innerHTML += `<span class="absolute left-px -translate-y-1/2 font-['DejaVu_Sans',sans-serif] text-[9px] leading-3 whitespace-nowrap" style="top:${(y - 57) / 6.57}%">${t}</span>`;
    });
    [[129, 'R2', 'text-[#ff0000]'], [226, 'R1', 'text-[#ff0000]'], [394, 'Piv', 'text-black'], [490, 'S1', 'text-[#008000]'], [657, 'S2', 'text-[#008000]']].forEach(([y, t, c]) => {
      document.getElementById('priceLabels').innerHTML += `<span class="absolute -translate-y-1/2 leading-3 ${c}" style="left:${1183 / 12.26}%;top:${(y - 57) / 6.57}%">${t}</span>`;
    });

    // ---- MACD ----
    const macd = `27,736 41,740 51,741 61,739 78,736 139,729 163,730 200,731 212,733 233,740 245,741 261,741 271,744 286,742 304,744 314,741 343,740 367,737 380,735 400,735 416,731 433,728 453,728 461,727 498,726 514,723 531,721 559,721 584,724 600,727 612,732 629,736 642,737 663,741 669,742 679,742 691,743 714,743 726,741 746,736 771,732 799,727 810,727 824,733 840,737 856,739 873,738 885,743 899,749 914,750 922,749 942,752 979,753 1028,754 1036,757 1056,756 1091,759 1105,767 1124,771 1140,770 1159,757 1181,734`;
    const signal = `27,733 60,736 90,734 137,731 200,730 212,731 245,735 265,739 286,741 310,742 347,741 367,739 392,737 424,733 449,731 482,728 510,725 539,723 571,723 600,725 629,730 652,733 673,738 697,741 722,742 746,740 775,737 799,732 816,730 844,734 873,735 897,741 918,745 942,748 979,751 1028,753 1077,756 1101,759 1122,764 1138,766 1154,764 1181,753`;
    const hist = [-2,-4,-5,-6,-6,-7,-6,-4,-2,-1, 2,3,4,4,3,3,2,3,2, 0,0,0,0,0,0, -1,-3,-4,-5,-5,-5,-4,-4,-4,-3,-2,-1,-2, 0,1,1,0,1,2,3,3,4,3,2,3,4,4,5,4,3,3,3,3,2,2,1,2,3,3,4,3,3,2,2,1, 0,-1,-2,-3,-3,-5,-6,-6, -5,-5,-5,-6,-6,-4,-4,-4,-3,-3,-2,-1, 2,3,4,4,5,5,5,5,5,4,3,1, -3,-4,-4,-4,-4,-3,-2, -5,-6,-7,-6,-5,-5,-5,-5,-4,-3,-3,-3, -2,-2,-2,-2,-1,0, -2,-3,-1,-1,-1,-1,-1,-2, -6,-7,-7,-7,-6,-4, 1,6,12,17,19];
    const bars = hist.map((v, i) => {
      const x = Math.round(4 + i * 8.12) - 2.5;
      if (!v) return '';
      return v > 0
        ? `<rect x="${x}" y="${743.5 - v}" width="6" height="${v}" fill="#55dd55" stroke="#0a8a0a"/>`
        : `<rect x="${x}" y="743.5" width="6" height="${-v}" fill="#ee7777" stroke="#b02828"/>`;
    }).join('');
    document.getElementById('macd').innerHTML =
      between(macd, signal, '#93dfae', '#dc9db2') + bars + hline(743.5, '#2b2bd8') +
      line(signal, '#dd6666', 2) + line(macd, '#2b2bd8', 2);

    // ---- Momentum ----
    const momentum = `0,807 8,811 16,812 47,812 57,807 63,806 78,805 94,798 108,797 135,792 141,789 151,794 157,801 165,799 173,802 184,802 191,806 199,803 206,808 214,807 222,811 239,814 249,808 256,806 271,812 288,808 296,810 305,809 312,799 337,800 345,802 361,798 369,795 376,799 394,799 402,792 409,800 424,794 433,794 450,799 458,795 474,797 498,797 507,794 515,797 531,796 548,792 556,800 564,797 588,799 604,808 612,812 640,811 652,812 661,817 669,811 679,809 685,811 695,808 702,810 710,804 719,804 734,798 746,797 759,792 767,791 774,794 789,792 799,790 810,793 816,797 824,807 832,810 841,810 848,807 863,809 872,807 880,821 897,821 914,815 921,807 938,811 945,815 954,812 969,819 978,804 987,807 1003,810 1019,813 1027,808 1034,813 1043,813 1052,810 1067,810 1076,815 1083,812 1091,816 1099,825 1116,823 1124,826 1133,817 1140,814 1155,804 1173,780 1181,783`;
    const mp = pts(momentum);
    document.getElementById('momentum').innerHTML =
      between(momentum, '0,805 1226,805', '#97bfae', '#b79db1') +
      mp.slice(1).map((p, i) => line(mp[i] + ' ' + p, p[1] > mp[i][1] ? '#dd6666' : '#000', 2)).join('') +
      hline(805.5, '#2b2bd8');

    // ---- RSI ----
    const rsi = `0,857 8,861 20,864 45,865 53,862 60,856 78,854 92,851 108,852 118,855 143,852 149,855 158,859 165,856 173,857 183,854 191,857 199,855 207,861 222,864 239,864 247,861 263,862 272,865 280,860 297,860 304,864 312,856 335,859 359,856 394,857 408,853 416,852 435,851 450,855 458,850 474,854 492,853 507,848 522,849 547,849 556,851 565,852 572,857 588,856 604,858 613,864 629,861 652,862 661,866 677,860 701,863 720,860 734,853 754,854 765,851 785,851 795,849 808,852 823,864 832,863 841,864 848,860 856,862 873,857 880,868 891,866 914,865 921,862 930,866 952,864 991,865 1019,867 1026,865 1034,870 1042,870 1052,865 1076,869 1083,868 1092,870 1099,875 1124,873 1133,873 1140,868 1148,859 1156,857 1165,852 1173,850 1181,851`;
    document.getElementById('rsi').innerHTML = line(rsi, '#000', 2) + hline(850.5, '#ff0033') + hline(872.5, '#ff2222');

    // ---- Stochastic ----
    const k = `0,917 6,921 14,935 22,952 28,959 37,961 46,961 52,951 61,930 69,915 76,910 100,903 140,903 167,913 176,916 184,915 192,919 199,912 206,922 216,940 223,956 231,959 239,961 245,958 253,950 263,947 272,952 286,947 297,938 305,945 314,935 322,928 329,919 345,928 355,922 369,910 384,907 402,910 416,906 427,901 437,903 449,911 461,907 473,904 490,910 507,901 516,905 531,910 549,907 565,910 576,920 590,931 604,934 612,947 629,953 638,948 644,947 652,948 661,955 669,957 678,951 694,936 701,939 710,939 719,934 727,918 734,907 742,900 765,902 783,907 799,902 808,904 816,911 824,927 832,939 841,953 856,953 865,942 874,936 895,941 914,938 922,933 938,932 952,936 975,937 987,939 995,938 1018,949 1026,945 1035,948 1048,940 1059,931 1067,927 1075,935 1085,940 1099,953 1105,956 1118,956 1126,953 1136,952 1142,948 1154,923 1163,907 1171,903 1181,903`;
    const d = `0,915 12,918 24,932 41,950 53,956 61,953 78,932 88,917 96,911 160,905 202,912 214,922 231,940 245,952 261,955 286,949 306,944 335,931 367,921 388,910 412,908 441,904 469,907 510,906 547,906 567,909 592,921 616,935 640,947 652,949 677,952 701,946 722,937 746,917 767,902 795,902 818,906 836,922 856,943 869,948 893,940 926,938 942,934 983,937 1016,941 1044,947 1069,937 1089,935 1110,947 1126,953 1140,954 1154,943 1181,913`;
    document.getElementById('stoch').innerHTML =
      between(k, d, '#989ed4', '#dcbccd') + line(d, '#dd4a5a', 1, 'stroke-dasharray="3 2"') + line(k, '#000') +
      hline(911.5, '#2b2bd8') + hline(952.5, '#2b2bd8');

    // ---- value axes: [y, text, kind, colour] ----
    const kinds = {
      tick: 'left-[6px]',
      bold: 'left-[6px] font-bold text-[12px]',
      box: 'left-1 h-4 pl-px border border-[#66889a] bg-linear-to-b from-white to-[#dae5ff]',
      last: 'left-1 h-4 pl-px border border-[#66889a] bg-[#ffd800]',
      timer: 'left-1 h-[14px] pl-px border border-[#30a030] bg-[#5ee060]'
    };
    function axis(id, top, height, rows) {
      document.getElementById(id).innerHTML = rows.map(([y, text, kind, colour = 'text-black']) =>
        (kind === 'tick' || kind === 'bold' ? `<i class="absolute left-0 w-1 h-px bg-[#66889a]" style="top:${(y - top) / height * 100}%"></i>` : '') +
        `<span class="absolute -translate-y-1/2 leading-[14px] whitespace-nowrap ${kinds[kind]} ${colour}" style="top:${(y - top) / height * 100}%">${text}</span>`).join('');
    }
    axis('priceAxis', 56, 659, [
      [94, '13.400', 'tick'], [175, '13.300', 'tick'], [216, '13.250', 'tick'], [418, '13.000', 'bold'], [458, '12.950', 'tick'], [539, '12.850', 'tick'], [579, '12.800', 'tick'], [620, '12.750', 'tick'], [700, '12.650', 'tick'],
      [136, '13.348', 'box', 'text-[#ff0000]'], [154, '13.326,2', 'last'], [169, '2s31m', 'timer'],
      [232, '13.229', 'box', 'text-[#ff0000]'], [257, '13.198', 'box', 'text-[#00ee00]'], [296, '13.150', 'box', 'text-[#00ffff]'],
      [325, '13.117', 'box', 'text-[#009933]'], [342, '13.096', 'box', 'text-[#0033ff]'], [330, '13.109', 'box', 'text-[#ff0033]'],
      [381, '13.045', 'box', 'text-[#7a00b8]'], [400, '13.022', 'box'], [496, '12.903', 'box', 'text-[#008000]'], [609, '12.763', 'box', 'text-[#7a00b8]'], [663, '12.697', 'box', 'text-[#008000]']
    ]);
    axis('macdAxis', 717, 58, [[743, '0', 'bold'], [762, '-50', 'tick'], [734, '24,077', 'box', 'text-[#2b2bd8]'], [726, '52,452', 'box', 'text-[#44cc44]'], [753, '-27,576', 'box', 'text-[#dd5555]']]);
    axis('momentumAxis', 777, 52, [[805, '0', 'bold'], [821, '-200', 'tick'], [786, '287,2', 'box', 'text-[#dd5555]']]);
    axis('rsiAxis', 831, 60, [[838, '100', 'bold'], [861, '50', 'tick'], [884, '0', 'bold'], [851, '68,903', 'box']]);
    axis('stochAxis', 893, 77, [[932, '50', 'tick'], [963, '0', 'bold'], [913, '76,41', 'box', 'text-[#dd5555]'], [903, '91,574', 'box']]);

    // ---- dates ----
    const dates = [[28, '28'], [77, '29'], [126, '30'], [174, 'Dez'], [231, '04'], [280, '05'], [329, '06'], [377, '07'], [426, '09'], [482, '11'], [531, '12'], [580, '13'], [629, '14'], [677, '16'], [734, '18'], [783, '19'], [832, '20'], [880, '21'], [929, '23'], [978, '26'], [1010, '27'], [1059, '28'], [1107, '30'], [1164, '2013'], [1197, '03']];
    document.getElementById('dates').innerHTML = dates.map(([x, t]) =>
      `<span class="absolute top-[3px] -translate-x-1/2 flex flex-col items-center leading-[13px] ${t.length > 2 ? 'font-bold text-[12px]' : ''}" style="left:${x / 12.26}%"><i class="w-px h-1 bg-[#66889a]"></i>${t}</span>`).join('');

    // ---- palette ----
    const colours = ['#ffffff', '#d0d0d0', '#a8a8a8', '#808080', '#606060', '#000000', '#b8c8ff', '#6699ff', '#40c0ff', '#0000ff', '#3333dd', '#000099', '#8000c0', '#ff80c0', '#dd6666', '#ff0000', '#ee3333', '#884400', '#ff8040', '#ff8877', '#ffc040', '#ffff00', '#40ffc0', '#77ff77', '#00ff00', '#55dd55', '#33b333', '#008000'];
    document.getElementById('palette').innerHTML = colours.map(c =>
      `<button aria-label="${c}" class="w-[10px] h-[10px] rounded-xs ${c === '#000000' ? 'outline-2 outline-black relative' : 'inset-shadow-[0_2px_2px_#ffffff66]'}" style="background:${c}"></button>`).join('');
  </script>
</body>
</html>
